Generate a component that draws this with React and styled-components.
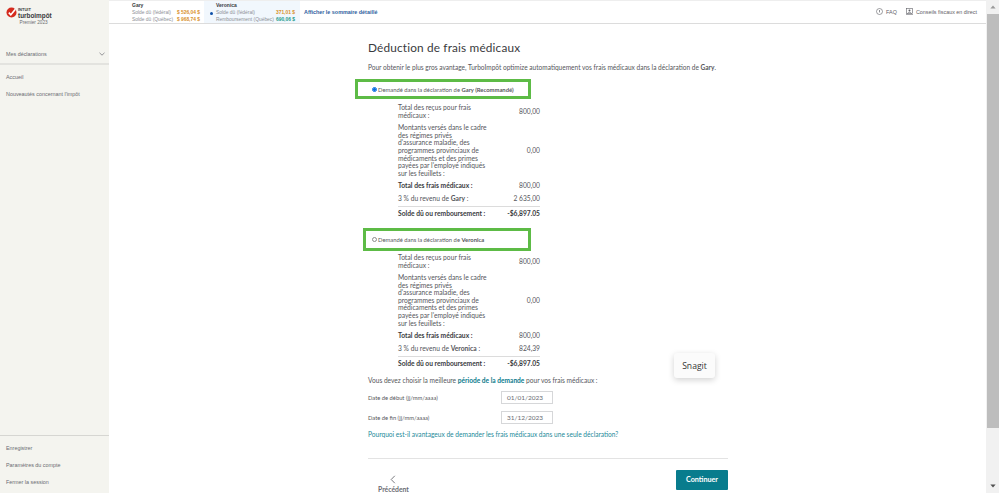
import React from "react";
import styled, { createGlobalStyle } from "styled-components";

const Global = createGlobalStyle`
  html, body { margin: 0; height: 100%; overflow: hidden; background: #fff; }
  #root { height: 100%; }
  * { box-sizing: border-box; }
`;
const Page = styled.div`
  position: relative; display: flex; width: 999px; height: 493px; overflow: hidden;
  font-family: Lato, "Noto Sans", sans-serif; color: #393a3d;
`;
const Sidebar = styled.aside`
  width: 109px; flex: none; background: #f4f4ef; display: flex; flex-direction: column;
  font-family: "Liberation Sans", Arial, sans-serif; font-size: 5.4px; color: #6b6c72;
`;
const Logo = styled.div`
  height: 44px; padding: 6px 0 0 6px; display: flex; gap: 1px;
`;
const LogoText = styled.div`
  display: flex; flex-direction: column; font-family: "Liberation Sans", Arial, sans-serif; color: #393a3d;
`;
const Intuit = styled.span`font-size: 4px; font-weight: 700; line-height: 5px; margin-top: 1px;`;
const Turbo = styled.span`font-size: 6.4px; font-weight: 700; line-height: 7px; margin-top: -.5px;`;
const Edition = styled.span`font-size: 4.7px; line-height: 6px; margin: 1.5px 0 0 1.5px; color: #6b6c72;`;
const MenuHead = styled.div`
  height: 19px; padding: 0 4px 0 6px; display: flex; align-items: center; justify-content: space-between;
`;
const Rule = styled.div`height: 2px; background: #e3e3df;`;
const NavList = styled.nav`display: flex; flex-direction: column; padding-top: 3px;`;
const NavItem = styled.div`height: 17px; padding-left: 6px; display: flex; align-items: center;`;
const SideFoot = styled.div`
  margin-top: auto; height: 58px; border-top: 1px solid #d6d6d2; display: flex; flex-direction: column; padding-top: 3px;
`;
const Body = styled.div`flex: 1; min-width: 0; display: flex; flex-direction: column;`;
const TopBar = styled.header`
  height: 24px; flex: none; border-bottom: 1px solid #dcdcdc; border-top: 1px solid #eee; display: flex; align-items: stretch;
  padding-left: 8px; font-family: "Liberation Sans", Arial, sans-serif; font-size: 4.9px; color: #8d9096;
`;
const Person = styled.div`
  width: ${p => p.$w}px; padding: 1px 0 0 ${p => p.$pl}px; background: ${p => p.$bg || "transparent"}; flex: none; position: relative;
`;
const PName = styled.div`font-weight: 700; color: #393a3d; line-height: 7px; font-size: 5px;`;
const PLine = styled.div`display: flex; justify-content: space-between; line-height: 7px; padding-right: ${p => p.$pr}px;`;
const Amt = styled.span`font-weight: 700; color: ${p => p.$c};`;
const Dot = styled.span`position: absolute; left: 6px; top: 10.5px; width: 3px; height: 3px; border-radius: 50%; background: #0d4fa8;`;
const SummaryLink = styled.a`
  margin-left: 4px; align-self: center; font-weight: 700; font-size: 5.4px; color: #2f5f9e; margin-top: -1px;
`;
const TopRight = styled.div`
  margin-left: auto; padding-right: 9px; display: flex; align-items: center; gap: 9px; font-size: 5.4px; color: #5f6066; margin-top: -1px;
`;
const TopLink = styled.span`display: flex; align-items: center; gap: 3px;`;
const Content = styled.main`
  flex: 1; width: 360px; margin-left: 259px; padding-top: 17px; display: flex; flex-direction: column;
`;
const Title = styled.h1`
  margin: 0; font-size: 11.8px; font-weight: 400; line-height: 14px; letter-spacing: .17px; color: #393a3d;
`;
const Intro = styled.p`margin: 9px 0 0; font-size: 6.55px; line-height: 8px; color: #55565b;`;
const ChoiceBox = styled.div`
  display: flex; align-items: center; gap: 1px; border: 3px solid #5dbb46; height: ${p => p.$h}px;
  width: ${p => p.$w}px; margin-left: ${p => p.$ml}px; margin-top: ${p => p.$mt}px;
  padding-left: ${p => p.$pl}px; font-size: 5.85px; color: #55565b;
`;
const Radio = styled.span`
  width: 5px; height: 5px; border-radius: 50%; flex: none;
  border: 1px solid ${p => (p.$on ? "#0a6ee0" : "#8d8d8d")};
  background: ${p => (p.$on ? "radial-gradient(circle, #0a6ee0 60%, #cfe2fb 70%)" : "#fff")};
`;
const Table = styled.div`margin-left: 30px; width: 142px; display: flex; flex-direction: column; font-size: 6.7px; line-height: 7.6px; color: #55565b; padding-top: ${p => p.$pt}px;`;
const Row = styled.div`
  display: flex; justify-content: space-between; align-items: center; padding-top: ${p => p.$pt || 0}px;
  padding-bottom: ${p => p.$pb || 0}px; border-top: ${p => (p.$rule ? "1px solid #dcdcdc" : "none")};
`;
const RowLabel = styled.div`width: 112px; font-weight: ${p => (p.$b ? 700 : 400)}; color: ${p => (p.$b ? "#393a3d" : "inherit")};`;
const RowValue = styled.div`font-weight: ${p => (p.$b ? 700 : 400)}; white-space: nowrap; color: ${p => (p.$b ? "#393a3d" : "inherit")};`;
const Question = styled.p`margin: 8.4px 0 0; font-size: 6.6px; line-height: 8px; color: #55565b;`;
const Teal = styled.b`color: #0a7a8c;`;
const DateRow = styled.div`display: flex; align-items: center; height: 13px; margin-top: ${p => p.$mt}px; font-size: 5.8px; color: #55565b;`;
const DateLabel = styled.div`width: 133px;`;
const DateInput = styled.div`
  width: 52px; height: 13px; border: 1px solid #d6d7d9; padding-left: 5px; font-size: 6.5px; line-height: 11px; color: #6b6c72;
`;
const WhyLink = styled.a`margin-top: 5.5px; font-size: 6.6px; line-height: 8px; color: #1d8a99;`;
const Footer = styled.div`
  margin-top: 20px; border-top: 1px solid #e3e3e3; padding-top: 11px; display: flex; justify-content: space-between; align-items: flex-start;
`;
const Back = styled.div`
  margin: 5px 0 0 10px; display: flex; flex-direction: column; align-items: flex-start; font-size: 6.8px; font-weight: 700; color: #6b6c72; line-height: 8px;
`;
const BackIcon = styled.svg`margin-left: 12px; margin-bottom: 1px;`;
const Continue = styled.div`
  width: 52px; height: 20px; background: #087c8d; color: #fff; font-size: 7.2px; font-weight: 700; display: flex; align-items: center; justify-content: center; border-radius: 1px;
`;
const Scrollbar = styled.div`
  width: 13px; flex: none; background: #f1f1f1; display: flex; flex-direction: column; align-items: center; padding-left: 1px;
`;
const Arrow = styled.div`
  height: 14px; flex: none; display: flex; align-items: center; justify-content: center;
`;
const Thumb = styled.div`width: 100%; height: 414px; background: #bdbdbd;`;
const Spacer = styled.div`flex: 1;`;
const Snagit = styled.div`
  position: absolute; left: 674px; top: 353px; width: 41px; height: 25px; background: #fbfbfb; border-radius: 3px;
  box-shadow: 0 2px 6px rgba(0,0,0,.18); font-family: "Open Sans", sans-serif; font-size: 8.6px; color: #333;
  display: flex; align-items: center; justify-content: center;
`;

const TableRows = ({ name, last }) => (
  <>
    <Row>
      <RowLabel>Total des reçus pour frais<br />médicaux :</RowLabel>
      <RowValue>800,00</RowValue>
    </Row>
    <Row $pt={5}>
      <RowLabel>
        Montants versés dans le cadre<br />des régimes privés<br />d'assurance maladie, des<br />programmes provinciaux de<br />médicaments et des primes<br />payées par l'employé indiqués<br />sur les feuillets :
      </RowLabel>
      <RowValue>0,00</RowValue>
    </Row>
    <Row $pt={5}>
      <RowLabel $b>Total des frais médicaux :</RowLabel>
      <RowValue>800,00</RowValue>
    </Row>
    <Row $pt={5} $pb={3.4}>
      <RowLabel>3 % du revenu de <b>{name}</b> :</RowLabel>
      <RowValue>{last}</RowValue>
    </Row>
    <Row $rule $pt={3}>
      <RowLabel $b>Solde dû ou remboursement :</RowLabel>
      <RowValue $b>-$6,897.05</RowValue>
    </Row>
  </>
);

export default function App() {
  return (
    <Page>
      <Global />
      <Sidebar>
        <Logo>
          <svg width="11" height="11" viewBox="0 0 11 11" style={{ marginTop: 1 }}>
            <circle cx="5.5" cy="5.5" r="5" fill="#d52b1e" />
            <path d="M2.8 5.6 L4.8 7.8 L9.4 2.2" fill="none" stroke="#fff" strokeWidth="1.6" />
          </svg>
          <LogoText>
            <Intuit>INTUIT</Intuit>
            <Turbo>turboimpôt</Turbo>
            <Edition>Premier 2023</Edition>
          </LogoText>
        </Logo>
        <MenuHead>
          Mes déclarations
          <svg width="6" height="4" viewBox="0 0 6 4"><path d="M.5.8 3 3.2 5.5.8" fill="none" stroke="#6b6c72" strokeWidth=".7" /></svg>
        </MenuHead>
        <Rule />
        <NavList>
          <NavItem>Accueil</NavItem>
          <NavItem>Nouveautés concernant l'impôt</NavItem>
        </NavList>
        <SideFoot>
          <NavItem>Enregistrer</NavItem>
          <NavItem>Paramètres du compte</NavItem>
          <NavItem>Fermer la session</NavItem>
        </SideFoot>
      </Sidebar>
      <Body>
        <TopBar>
          <Person $w={87} $pl={15}>
            <PName>Gary</PName>
            <PLine $pr={4}><span>Solde dû (fédéral)</span><Amt $c="#d8902a">$ 526,04 $</Amt></PLine>
            <PLine $pr={4}><span>Solde dû (Québec)</span><Amt $c="#d8902a">$ 968,74 $</Amt></PLine>
          </Person>
          <Person $w={96} $bg="#f1f7fd" $pl={12}>
            <Dot />
            <PName>Veronica</PName>
            <PLine $pr={5}><span>Solde dû (fédéral)</span><Amt $c="#d8902a">371,01 $</Amt></PLine>
            <PLine $pr={5}><span>Remboursement (Québec)</span><Amt $c="#1b9a8a">690,06 $</Amt></PLine>
          </Person>
          <SummaryLink>Afficher le sommaire détaillé</SummaryLink>
          <TopRight>
            <TopLink>
              <svg width="7" height="7" viewBox="0 0 7 7"><circle cx="3.5" cy="3.5" r="3" fill="none" stroke="#5f6066" strokeWidth=".6" /><path d="M3.5 2v2.4" stroke="#5f6066" strokeWidth=".7" /></svg>
              FAQ
            </TopLink>
            <TopLink>
              <svg width="7" height="7" viewBox="0 0 7 7"><rect x=".5" y=".5" width="6" height="5" fill="none" stroke="#5f6066" strokeWidth=".6" /><circle cx="3.5" cy="2.4" r="1" fill="#5f6066" /><path d="M1.5 5.5c.3-1.5 3.7-1.5 4 0M0 6.6h7" fill="none" stroke="#5f6066" strokeWidth=".6" /></svg>
              Conseils fiscaux en direct
            </TopLink>
          </TopRight>
        </TopBar>
        <Content>
          <Title>Déduction de frais médicaux</Title>
          <Intro>Pour obtenir le plus gros avantage, TurboImpôt optimize automatiquement vos frais médicaux dans la déclaration de <b>Gary</b>.</Intro>
          <ChoiceBox $h={20} $w={176} $ml={-13} $mt={7} $pl={14}>
            <Radio $on />
            <span>Demandé dans la déclaration de <b>Gary (Recommandé)</b></span>
          </ChoiceBox>
          <Table $pt={5}><TableRows name="Gary" last="2 635,00" /></Table>
          <ChoiceBox $h={23} $w={168} $ml={-5} $mt={10.4} $pl={6}>
            <Radio />
            <span>Demandé dans la déclaration de <b>Veronica</b></span>
          </ChoiceBox>
          <Table $pt={3}><TableRows name="Veronica" last="824,39" /></Table>
          <Question>Vous devez choisir la meilleure <Teal>période de la demande</Teal> pour vos frais médicaux :</Question>
          <DateRow $mt={7}><DateLabel>Date de début (jj/mm/aaaa)</DateLabel><DateInput>01/01/2023</DateInput></DateRow>
          <DateRow $mt={7.5}><DateLabel>Date de fin (jj/mm/aaaa)</DateLabel><DateInput>31/12/2023</DateInput></DateRow>
          <WhyLink>Pourquoi est-il avantageux de demander les frais médicaux dans une seule déclaration?</WhyLink>
          <Footer>
            <Back>
              <BackIcon width="6" height="9" viewBox="0 0 6 9"><path d="M4.8.8 1.2 4.5l3.6 3.7" fill="none" stroke="#6b6c72" strokeWidth=".9" /></BackIcon>
              Précédent
            </Back>
            <Continue>Continuer</Continue>
          </Footer>
        </Content>
      </Body>
      <Scrollbar>
        <Arrow><svg width="6" height="4" viewBox="0 0 6 4"><path d="M3 .5 5.6 3.5H.4z" fill="#9a9a9a" /></svg></Arrow>
        <Thumb />
        <Spacer />
        <Arrow><svg width="6" height="4" viewBox="0 0 6 4"><path d="M3 3.5 5.6 .5H.4z" fill="#505050" /></svg></Arrow>
      </Scrollbar>
      <Snagit>Snagit</Snagit>
    </Page>
  );
}
